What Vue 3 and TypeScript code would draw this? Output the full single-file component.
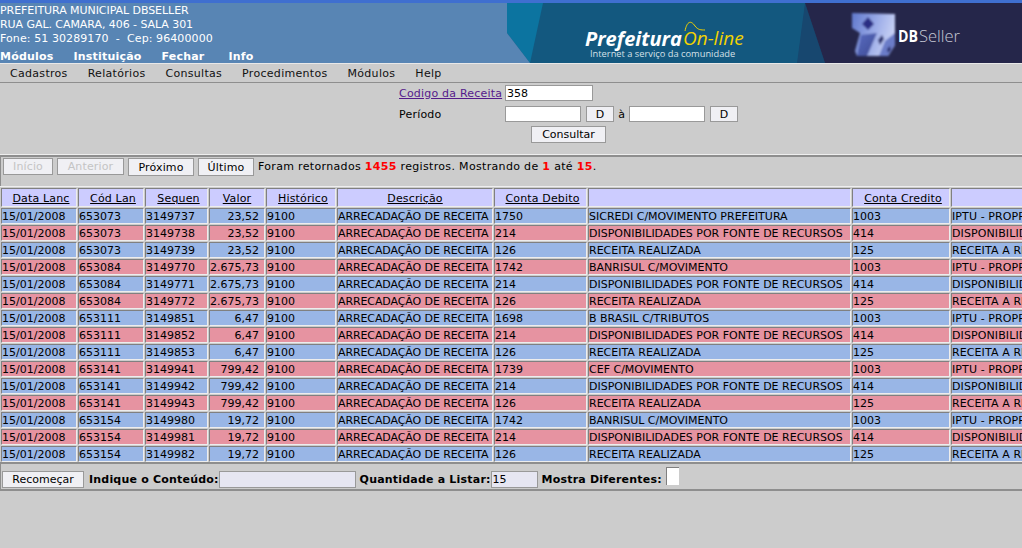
<template>
  <div class="page">
    <header class="top">
      <div class="inst">
        <div class="inst-text">
          <div class="tight">PREFEITURA MUNICIPAL DBSELLER</div>
          <div class="tight">RUA GAL. CAMARA, 406 - SALA 301</div>
          <div class="loose">Fone: 51 30289170&nbsp; - &nbsp;Cep: 96400000</div>
        </div>
        <nav class="top-links">
          <span>Módulos</span><span>Instituição</span><span>Fechar</span><span>Info</span>
        </nav>
      </div>
      <svg class="banner" width="515" height="60" viewBox="0 0 515 60">
        <defs>
          <linearGradient id="cube" x1="0" y1="0" x2="1" y2="0.3">
            <stop offset="0" stop-color="#5f78cc" />
            <stop offset="0.55" stop-color="#97a8e6" />
            <stop offset="1" stop-color="#c6d0f4" />
          </linearGradient>
          <linearGradient id="cubeLow" x1="0" y1="0" x2="1" y2="1">
            <stop offset="0" stop-color="#5a6cc0" />
            <stop offset="1" stop-color="#3d4a94" />
          </linearGradient>
          <filter id="soft"><feGaussianBlur stdDeviation="0.8" /></filter>
        </defs>
        <rect width="515" height="60" fill="#13587f" />
        <polygon points="0,0 36,0 23,60 0,30" fill="#0c74a0" />
        <polygon points="0,30 23,60 0,60" fill="#5885b4" />
        <polygon points="298,0 318,60 290,60" fill="#17476f" />
        <polygon points="298,0 515,0 515,60 318,60" fill="#25264a" />
        <path d="M178 28 C180 18 184 17 188 23 C191 27 194 27 198 27" fill="none" stroke="#f2d200" stroke-width="1" />
        <text x="78" y="43" class="b-pref">Prefeitura</text>
        <text x="176" y="42" class="b-online">On-line</text>
        <text x="83" y="54" class="b-sub">Internet a serviço da comunidade</text>
        <g filter="url(#soft)">
          <polygon points="345,10 388,11 388,42 381,53 350,53 348,48 353,30 345,25" fill="url(#cube)" />
          <polygon points="350,53 354,32 370,30 360,53" fill="url(#cubeLow)" />
          <polygon points="381,53 388,42 388,30 378,38 372,53" fill="#6a7cc8" />
          <polygon points="361,14 367,21 361,27 355,21" fill="#2b2f84" />
          <polygon points="371,37 375,32 377,36 373,42" fill="#2b3070" />
          <polygon points="380,46 383,43 384,47 381,50" fill="#2b3070" />
        </g>
        <text x="391" y="39" textLength="20" lengthAdjust="spacingAndGlyphs" class="b-db">DB</text>
        <text x="412" y="39" class="b-seller">Seller</text>
      </svg>
    </header>

    <div class="menu">
      <span v-for="m in menuItems" :key="m">{{ m }}</span>
    </div>

    <form class="filter" @submit.prevent>
      <a class="lbl link" href="#">Codigo da Receita</a>
      <input class="inp code" value="358" />
      <span class="lbl">Período</span>
      <div class="period">
        <input class="inp date" />
        <button type="button" class="btn d">D</button>
        <span class="a">à</span>
        <input class="inp date" />
        <button type="button" class="btn d">D</button>
      </div>
      <button type="button" class="btn go">Consultar</button>
    </form>

    <div class="pager">
      <button class="btn off w-ini" disabled>Início</button>
      <button class="btn off w-ant" disabled>Anterior</button>
      <button class="btn w-pro">Próximo</button>
      <button class="btn w-ult">Último</button>
      <span class="count">Foram retornados <b>1455</b> registros. Mostrando de <b>1</b> até <b>15</b>.</span>
    </div>

    <div class="grid-wrap">
      <table class="grid">
        <colgroup>
          <col v-for="(w, i) in colWidths" :key="i" :style="{ width: w + 'px' }" />
        </colgroup>
        <thead>
          <tr>
            <th v-for="(h, i) in headers" :key="i"><u v-if="h">{{ h }}</u></th>
          </tr>
        </thead>
        <tbody>
          <tr v-for="(r, i) in rows" :key="r.seq" :class="i % 2 ? 'red' : 'blue'">
            <td>15/01/2008</td>
            <td>{{ r.lan }}</td>
            <td>{{ r.seq }}</td>
            <td class="num">{{ r.val }}</td>
            <td>9100</td>
            <td class="desc">ARRECADAÇÃO DE RECEITA</td>
            <td>{{ r.deb }}</td>
            <td>{{ r.debDesc }}</td>
            <td>{{ r.cred }}</td>
            <td class="cred">{{ r.credDesc }}</td>
          </tr>
        </tbody>
      </table>
    </div>

    <div class="foot">
      <button class="btn again">Recomeçar</button>
      <label class="fl">Indique o Conteúdo:</label>
      <input class="inp lilac content" />
      <label class="fl">Quantidade a Listar:</label>
      <input class="inp lilac qty" value="15" />
      <label class="fl">Mostra Diferentes:</label>
      <span class="check"></span>
    </div>
  </div>
</template>

<script setup lang="ts">
const menuItems = ['Cadastros', 'Relatórios', 'Consultas', 'Procedimentos', 'Módulos', 'Help']

const headers = ['Data Lanc', 'Cód Lan', 'Sequen', 'Valor', 'Histórico', 'Descrição', 'Conta Debito', '', 'Conta Credito', '']
const colWidths = [76, 66, 63, 56, 70, 156, 93, 263, 98, 200]

const DISP = 'DISPONIBILIDADES POR FONTE DE RECURSOS'
const REAL = 'RECEITA REALIZADA'
const IPTU = 'IPTU - PROPRIEDADE PREDIAL'
const AREAL = 'RECEITA A REALIZAR'

// lancamentos come in threes: the bank entry, then availability, then revenue
const groups = [
  ['653073', 3149737, '23,52', '1750', 'SICREDI C/MOVIMENTO PREFEITURA'],
  ['653084', 3149770, '2.675,73', '1742', 'BANRISUL C/MOVIMENTO'],
  ['653111', 3149851, '6,47', '1698', 'B BRASIL C/TRIBUTOS'],
  ['653141', 3149941, '799,42', '1739', 'CEF C/MOVIMENTO'],
  ['653154', 3149980, '19,72', '1742', 'BANRISUL C/MOVIMENTO'],
] as const

const rows = groups.flatMap(([lan, seq, val, deb, debDesc]) => [
  { lan, seq, val, deb, debDesc, cred: '1003', credDesc: IPTU },
  { lan, seq: seq + 1, val, deb: '214', debDesc: DISP, cred: '414', credDesc: DISP },
  { lan, seq: seq + 2, val, deb: '126', debDesc: REAL, cred: '125', credDesc: AREAL },
])
</script>

<style>
html,
body {
  margin: 0;
  height: 100%;
  overflow: hidden;
  background: #cccccc;
}
</style>

<style scoped>
.page {
  width: 1022px;
  height: 548px;
  overflow: hidden;
  background: #cccccc;
  color: #000;
  font-family: 'DejaVu Sans', sans-serif;
  font-size: 11px;
}

.top {
  display: flex;
  justify-content: space-between;
  height: 60px;
  border-top: 3px solid #3f6fd0;
  background: #5885b4;
  color: #fff;
}

.inst-text {
  line-height: 14px;
  padding-top: 1px;
  white-space: nowrap;
}

.tight {
  letter-spacing: -0.06px;
}

.loose {
  letter-spacing: 0.09px;
}

.top-links {
  display: flex;
  gap: 20px;
  margin-top: 4px;
  font-weight: bold;
  line-height: 14px;
  letter-spacing: 0.2px;
}

.top-links span:last-child {
  margin-left: 4px;
}

.banner {
  display: block;
  flex: none;
}

.b-pref {
  font: italic bold 20px 'Open Sans', sans-serif;
  fill: #fff;
}

.b-online {
  font: italic 19px 'Open Sans', sans-serif;
  fill: #f2d200;
}

.b-sub {
  font: 9.3px 'Open Sans', sans-serif;
  fill: #d5e0e8;
}

.b-db {
  font: bold 16.5px 'Open Sans', sans-serif;
  fill: #fff;
}

.b-seller {
  font: 300 16.5px 'Open Sans', sans-serif;
  fill: #c5c8d5;
}

.menu {
  display: flex;
  gap: 20px;
  height: 20px;
  padding-left: 10px;
  align-items: center;
  color: #111;
  letter-spacing: 0.3px;
  border-top: 1px solid #e8e8e8;
  border-bottom: 1px solid #8e8e8e;
  box-sizing: border-box;
}

.filter {
  display: grid;
  grid-template-columns: 106px auto;
  justify-content: start;
  align-content: start;
  align-items: center;
  row-gap: 5px;
  height: 72px;
  box-sizing: border-box;
  padding: 2px 0 0 399px;
  border-bottom: 1px solid #eeeeee;
}

.lbl {
  white-space: nowrap;
  letter-spacing: 0.2px;
}

.link {
  color: #551a8b;
}

.period {
  display: flex;
  align-items: center;
}

.inp {
  box-sizing: border-box;
  height: 16px;
  margin: 0;
  padding: 0 1px;
  border: 1px solid #999;
  border-radius: 0;
  background: #fff;
  font: 11px 'DejaVu Sans', sans-serif;
  color: #000;
  outline: none;
}

.code {
  width: 88px;
}

.date {
  width: 76px;
}

.btn {
  box-sizing: border-box;
  margin: 0;
  padding: 0;
  height: 18px;
  border: 1px solid #999;
  border-radius: 0;
  background: #f0f0f4;
  font: 11px 'DejaVu Sans', sans-serif;
  color: #000;
}

.d {
  width: 28px;
  height: 16px;
  margin-left: 5px;
}

.a {
  width: 15px;
  text-align: center;
}

.go {
  grid-column: 1 / 3;
  justify-self: start;
  width: 75px;
  height: 17px;
  margin-left: 132px;
  margin-top: -1px;
}

.pager {
  display: flex;
  align-items: flex-start;
  gap: 4px;
  height: 31px;
  box-sizing: border-box;
  padding: 1px 0 0 2px;
  border-top: 2px solid #8e8e8e;
  border-left: 1px solid #8e8e8e;
  white-space: nowrap;
}

.pager .btn {
  letter-spacing: 0.15px;
}

.pager .off {
  height: 17px;
  color: #c4c4c4;
}

.w-ini {
  width: 50px;
}

.w-ant {
  width: 67px;
}

.w-pro {
  width: 66px;
}

.w-ult {
  width: 56px;
}

.count {
  line-height: 18px;
  letter-spacing: 0.33px;
}

.count b {
  color: #ff0000;
}

.grid-wrap {
  width: 1022px;
  height: 278px;
  overflow: hidden;
  border-top: 1px solid #eee;
  border-bottom: 2px solid #8e8e8e;
  box-sizing: border-box;
}

.grid {
  table-layout: fixed;
  width: 1152px;
  border-collapse: separate;
  border-spacing: 1px;
}

.grid th,
.grid td {
  box-sizing: border-box;
  padding: 1px 0 0 0;
  border: 1px solid #808080;
  border-right-color: #ededed;
  border-bottom-color: #ededed;
  overflow: hidden;
  white-space: nowrap;
  font-size: 11px;
  line-height: 13px;
  height: 16px;
}

.grid th {
  height: 19px;
  padding-left: 4px;
  font-weight: normal;
  text-align: center;
  letter-spacing: 0.15px;
  background: #ccccff;
  color: #000;
}

.grid th:nth-child(4),
.grid th:nth-child(6) {
  padding-left: 0;
}

.grid .num {
  text-align: right;
  padding-right: 5px;
}

.grid .desc {
  letter-spacing: -0.1px;
}

.grid .cred {
  letter-spacing: 0.1px;
}

.blue td {
  background: #99b6e6;
}

.red td {
  background: #e693a1;
}

.foot {
  display: flex;
  align-items: flex-start;
  height: 27px;
  box-sizing: border-box;
  padding: 7px 0 0 1px;
  border-bottom: 2px solid #8e8e8e;
  border-left: 1px solid #8e8e8e;
  white-space: nowrap;
}

.again {
  width: 82px;
  height: 17px;
  margin-right: 5px;
}

.fl {
  font-weight: bold;
  letter-spacing: 0.2px;
  line-height: 18px;
}

.lilac {
  background: #e6e6f2;
  height: 17px;
}

.content {
  width: 137px;
  margin-right: 4px;
}

.qty {
  width: 47px;
  margin-right: 4px;
}

.check {
  width: 13px;
  height: 18px;
  margin: -4px 0 0 4px;
  background: #fff;
  border-top: 1px solid #808080;
  border-left: 1px solid #808080;
  box-sizing: border-box;
}
</style>
